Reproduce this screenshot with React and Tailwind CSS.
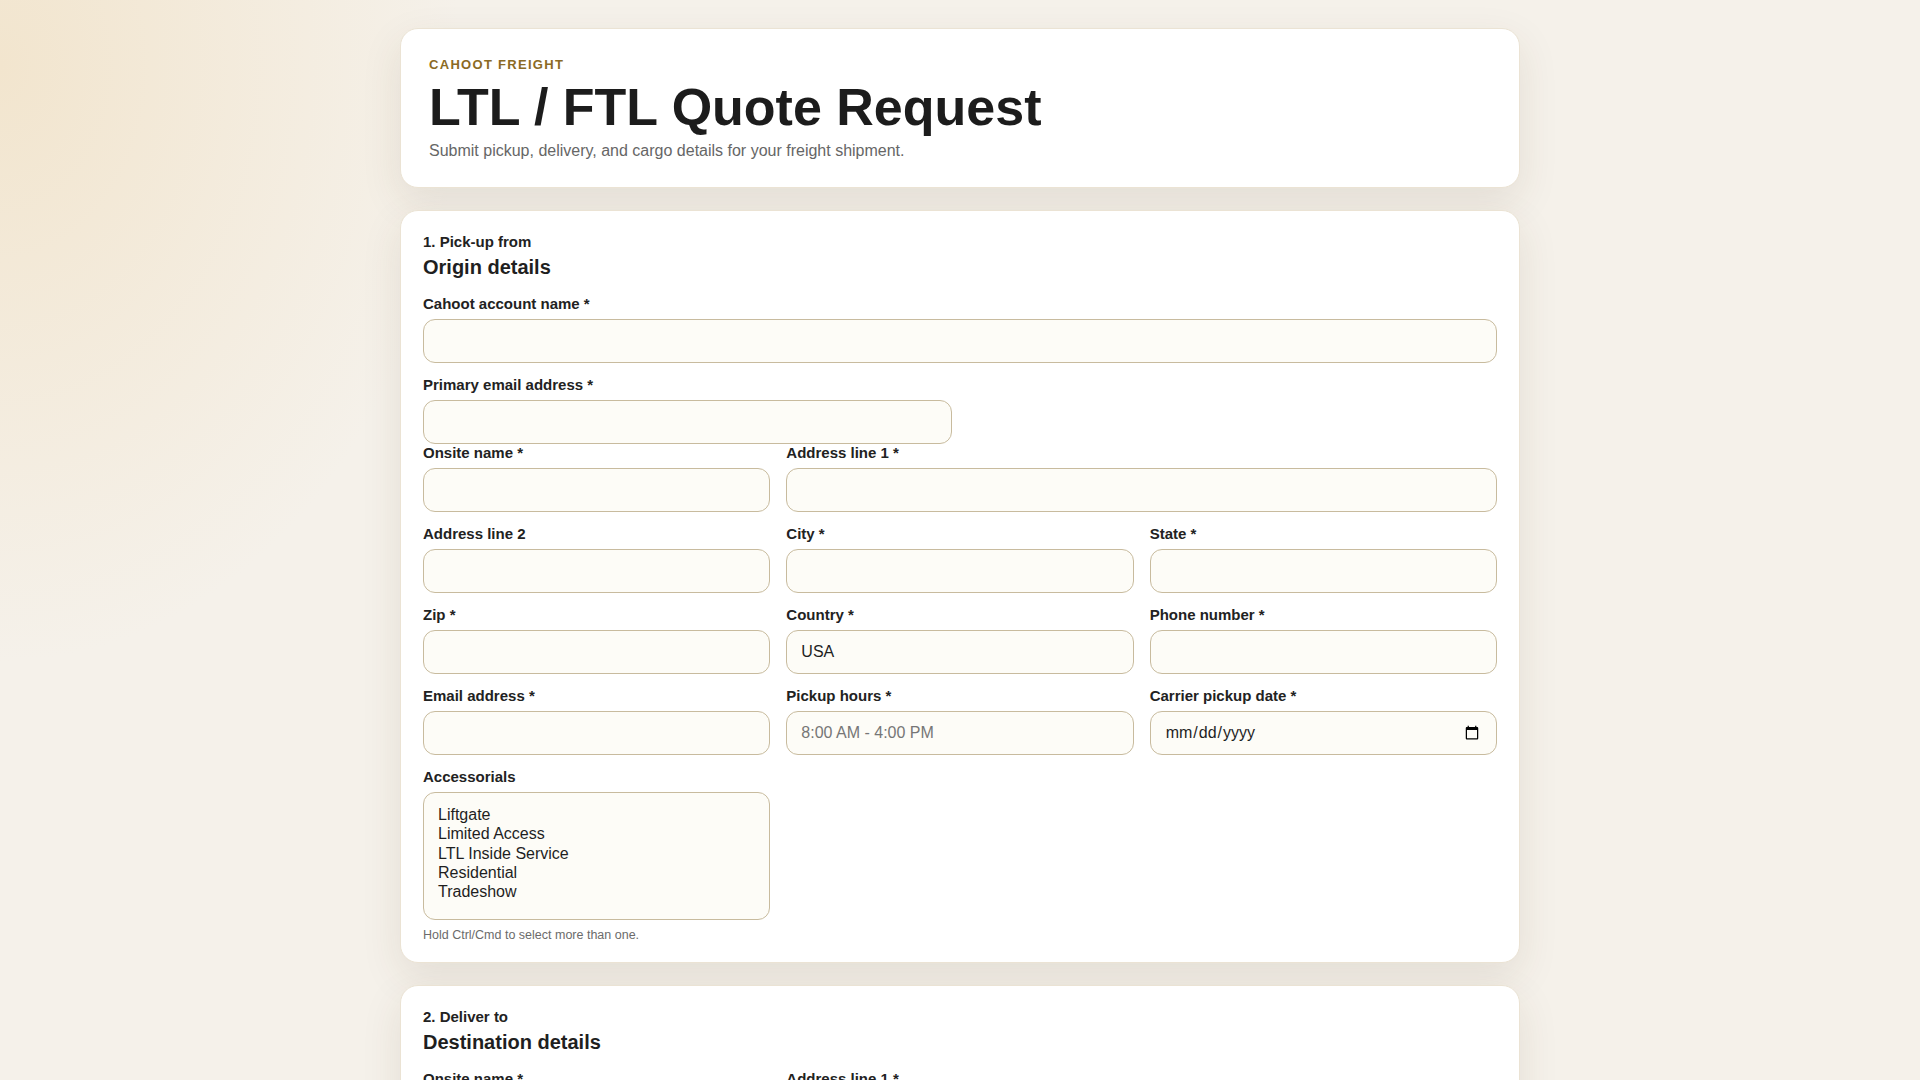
import React from 'react';

const inputCls =
  'block w-full h-11 rounded-xl border border-[#c8bb9e] bg-[#fdfcf7] px-3.5 text-[16px] text-[#1f1f1f] placeholder:text-[#767676] outline-none';

const Label = ({ children }) => (
  <label className="mb-1.5 block text-[15px] font-bold leading-[18px] text-[#222]">{children}</label>
);

const Field = ({ label, type = 'text', placeholder, defaultValue, className = '' }) => (
  <div className={className}>
    <Label>{label}</Label>
    <input type={type} placeholder={placeholder} defaultValue={defaultValue} className={inputCls} />
  </div>
);

const SectionHead = ({ step, title }) => (
  <div className="mb-[16px]">
    <p className="text-[15px] font-bold leading-[18px] text-[#222]">{step}</p>
    <h2 className="mt-1 text-[20px] font-bold leading-6 text-[#1f1f1f]">{title}</h2>
  </div>
);

const Card = ({ children, className = '' }) => (
  <section
    className={`rounded-[18px] border border-[#ebe3d4] bg-white shadow-[0_14px_40px_rgba(80,60,25,0.10)] ${className}`}
  >
    {children}
  </section>
);

const accessorials = ['Liftgate', 'Limited Access', 'LTL Inside Service', 'Residential', 'Tradeshow'];

const Accessorials = () => (
  <div>
    <Label>Accessorials</Label>
    <select
      multiple
      className="block h-[128px] w-full rounded-xl border border-[#c8bb9e] bg-[#fdfcf7] px-3.5 pb-2 pt-[13px] text-[16px] text-[#1f1f1f] outline-none"
    >
      {accessorials.map(a => (
        <option key={a} value={a}>{a}</option>
      ))}
    </select>
    <p className="mt-2 text-[12.5px] leading-[15px] text-[#6b6b6b]">Hold Ctrl/Cmd to select more than one.</p>
  </div>
);

const App = () => {
  return (
    <div className="min-h-screen bg-[#f5f1ea] bg-[radial-gradient(ellipse_24%_36%_at_0%_4%,#f2e5ce_0%,rgba(245,241,234,0)_100%)] font-['Liberation_Sans',Arial,sans-serif]">
      <div className="mx-auto flex max-w-[1120px] flex-col gap-[22px] pb-16 pt-7">
        <Card className="px-7 pb-6 pt-7">
          <p className="text-[13px] font-bold uppercase leading-4 tracking-[0.1em] text-[#8b6a24]">Cahoot Freight</p>
          <h1 className="mt-1.5 text-[52px] font-bold leading-[1.1] text-[#1c1c1c]">LTL / FTL Quote Request</h1>
          <p className="mt-[3px] text-[16px] leading-6 text-[#666]">
            Submit pickup, delivery, and cargo details for your freight shipment.
          </p>
        </Card>

        <Card className="px-[22px] pb-[19px] pt-[22px]">
          <SectionHead step="1. Pick-up from" title="Origin details" />
          <div className="flex flex-col gap-[13px]">
            <Field label="Cahoot account name *" />
            <div className="grid grid-cols-2 gap-x-4">
              <Field label="Primary email address *" type="email" />
            </div>
          </div>
          <div className="grid grid-cols-3 gap-x-4 gap-y-[13px]">
            <Field label="Onsite name *" />
            <Field label="Address line 1 *" className="col-span-2" />
            <Field label="Address line 2" />
            <Field label="City *" />
            <Field label="State *" />
            <Field label="Zip *" />
            <Field label="Country *" defaultValue="USA" />
            <Field label="Phone number *" type="tel" />
            <Field label="Email address *" type="email" />
            <Field label="Pickup hours *" placeholder="8:00 AM - 4:00 PM" />
            <Field label="Carrier pickup date *" type="date" />
            <Accessorials />
          </div>
        </Card>

        <Card className="px-[22px] pb-[21px] pt-[22px]">
          <SectionHead step="2. Deliver to" title="Destination details" />
          <div className="grid grid-cols-3 gap-x-4 gap-y-[13px]">
            <Field label="Onsite name *" />
            <Field label="Address line 1 *" className="col-span-2" />
            <Field label="Address line 2" />
            <Field label="City *" />
            <Field label="State *" />
            <Field label="Zip *" />
            <Field label="Country *" defaultValue="USA" />
            <Field label="Phone number *" type="tel" />
            <Field label="Email address *" type="email" />
            <Field label="Delivery hours *" placeholder="8:00 AM - 4:00 PM" />
            <div />
            <Accessorials />
          </div>
        </Card>
      </div>
    </div>
  );
};

export default App;
